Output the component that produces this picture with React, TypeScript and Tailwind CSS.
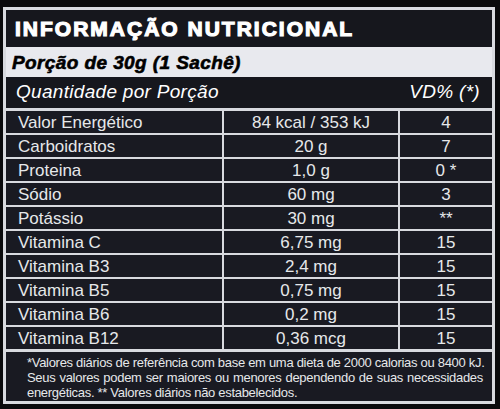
import React from "react";

const rows: [string, string, string][] = [
  ["Valor Energético", "84 kcal / 353 kJ", "4"],
  ["Carboidratos", "20 g", "7"],
  ["Proteina", "1,0 g", "0 *"],
  ["Sódio", "60 mg", "3"],
  ["Potássio", "30 mg", "**"],
  ["Vitamina C", "6,75 mg", "15"],
  ["Vitamina B3", "2,4 mg", "15"],
  ["Vitamina B5", "0,75 mg", "15"],
  ["Vitamina B6", "0,2 mg", "15"],
  ["Vitamina B12", "0,36 mcg", "15"],
];

export default function App() {
  return (
    <div className="w-[500px] h-[409px] bg-[#0a0a0c] pt-[7px] pl-[3px] font-['Liberation_Sans',Arial,sans-serif] overflow-hidden">
      <div className="w-[492px] bg-[#d8dadf] p-[3px] flex flex-col">
        <div className="h-[37px] bg-[#16171d] flex items-center pl-[9px]">
          <h1 className="text-[21px] font-bold text-white tracking-[2px] [-webkit-text-stroke:1.2px_white] leading-none">
            INFORMAÇÃO NUTRICIONAL
          </h1>
        </div>
        <div className="h-[30px] bg-[#e8e9ee] flex items-center pl-[6px]">
          <span className="text-[19px] font-bold italic text-black tracking-[0.4px] [-webkit-text-stroke:0.6px_black] leading-none">
            Porção de 30g (1 Sachê)
          </span>
        </div>
        <div className="h-[31px] bg-[#16171d] flex items-center justify-between pl-[10px] pr-[12px] text-white italic text-[19px] tracking-[0.3px]">
          <span>Quantidade por Porção</span>
          <span>VD% (*)</span>
        </div>
        <div className="mt-[3px] grid grid-cols-[216px_174px_92px] gap-x-[2px] gap-y-[2px]">
          {rows.map(([name, amount, vd]) => (
            <React.Fragment key={name}>
              <div className="h-[22px] bg-[#191a22] text-[#e6e8ea] text-[17px] leading-none flex items-center pl-[12px]">
                {name}
              </div>
              <div className="h-[22px] bg-[#191a22] text-[#e6e8ea] text-[17px] leading-none flex items-center justify-center">
                {amount}
              </div>
              <div className="h-[22px] bg-[#191a22] text-[#e6e8ea] text-[17px] leading-none flex items-center justify-center">
                {vd}
              </div>
            </React.Fragment>
          ))}
        </div>
        <div className="mt-[3px] h-[49px] bg-[#191a22] text-[#e6e8ea] text-[13px] leading-[15px] pl-[21px] pr-[9px] pt-[3px] tracking-[-0.3px]">
          <p className="whitespace-nowrap [text-align-last:justify]">
            *Valores diários de referência com base em uma dieta de 2000 calorias ou 8400 kJ.
          </p>
          <p className="whitespace-nowrap [text-align-last:justify]">
            Seus valores podem ser maiores ou menores dependendo de suas necessidades
          </p>
          <p className="whitespace-nowrap">energéticas. ** Valores diários não estabelecidos.</p>
        </div>
      </div>
    </div>
  );
}
